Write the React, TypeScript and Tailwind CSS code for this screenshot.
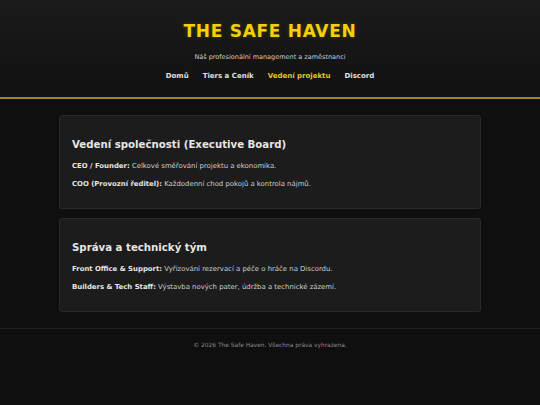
import React from "react";

const font = { fontFamily: '"DejaVu Sans", Verdana, sans-serif' };

function Card({ title, rows }: { title: string; rows: [string, string][] }) {
  return (
    <section className="rounded-[3px] border border-[#2a2a2a] bg-[#1c1c1c] px-[12px] pt-[22px] pb-[19px]">
      <h2 className="text-[10.2px] font-bold leading-[13px] text-[#e6e6e6]">{title}</h2>
      <div className="mt-[11px] flex flex-col gap-[9px]">
        {rows.map(([b, t]) => (
          <p key={b} className="text-[6.9px] leading-[9px] text-[#cfcfcf]">
            <strong className="font-bold text-[#e6e6e6]">{b}</strong> {t}
          </p>
        ))}
      </div>
    </section>
  );
}

export default function App() {
  return (
    <div className="min-h-[405px] bg-[#0f0f0f]" style={font}>
      <header className="border-b-2 border-[#9c8628] bg-gradient-to-b from-[#1b1b1b] to-[#111111] pt-[21px] pb-[16px] text-center">
        <h1
          className="text-[17px] font-bold leading-[20px] tracking-[0.7px] text-[#f2d00e]"
          style={{ textShadow: "0 0 4px rgba(255,214,10,0.2)" }}
        >
          THE SAFE HAVEN
        </h1>
        <p className="mt-[12px] text-[6.5px] leading-[9px] text-[#cccccc]">
          Náš profesionální management a zaměstnanci
        </p>
        <nav className="mt-[10px] flex justify-center gap-[14px] text-[7px] font-bold leading-[9px]">
          <a className="text-[#e0e0e0]">Domů</a>
          <a className="text-[#e0e0e0]">Tiers a Ceník</a>
          <a className="text-[#e8c32a]">Vedení projektu</a>
          <a className="text-[#e0e0e0]">Discord</a>
        </nav>
      </header>
      <main className="mx-auto flex w-[422px] flex-col gap-[9px] pt-[16px] pb-[16px]">
        <Card
          title="Vedení společnosti (Executive Board)"
          rows={[
            ["CEO / Founder:", "Celkové směřování projektu a ekonomika."],
            ["COO (Provozní ředitel):", "Každodenní chod pokojů a kontrola nájmů."],
          ]}
        />
        <Card
          title="Správa a technický tým"
          rows={[
            ["Front Office & Support:", "Vyřizování rezervací a péče o hráče na Discordu."],
            ["Builders & Tech Staff:", "Výstavba nových pater, údržba a technické zázemí."],
          ]}
        />
      </main>
      <footer className="border-t border-[#222222] pt-[12px] text-center text-[5.9px] leading-[8px] text-[#888888]">
        © 2026 The Safe Haven. Všechna práva vyhrazena.
      </footer>
    </div>
  );
}
